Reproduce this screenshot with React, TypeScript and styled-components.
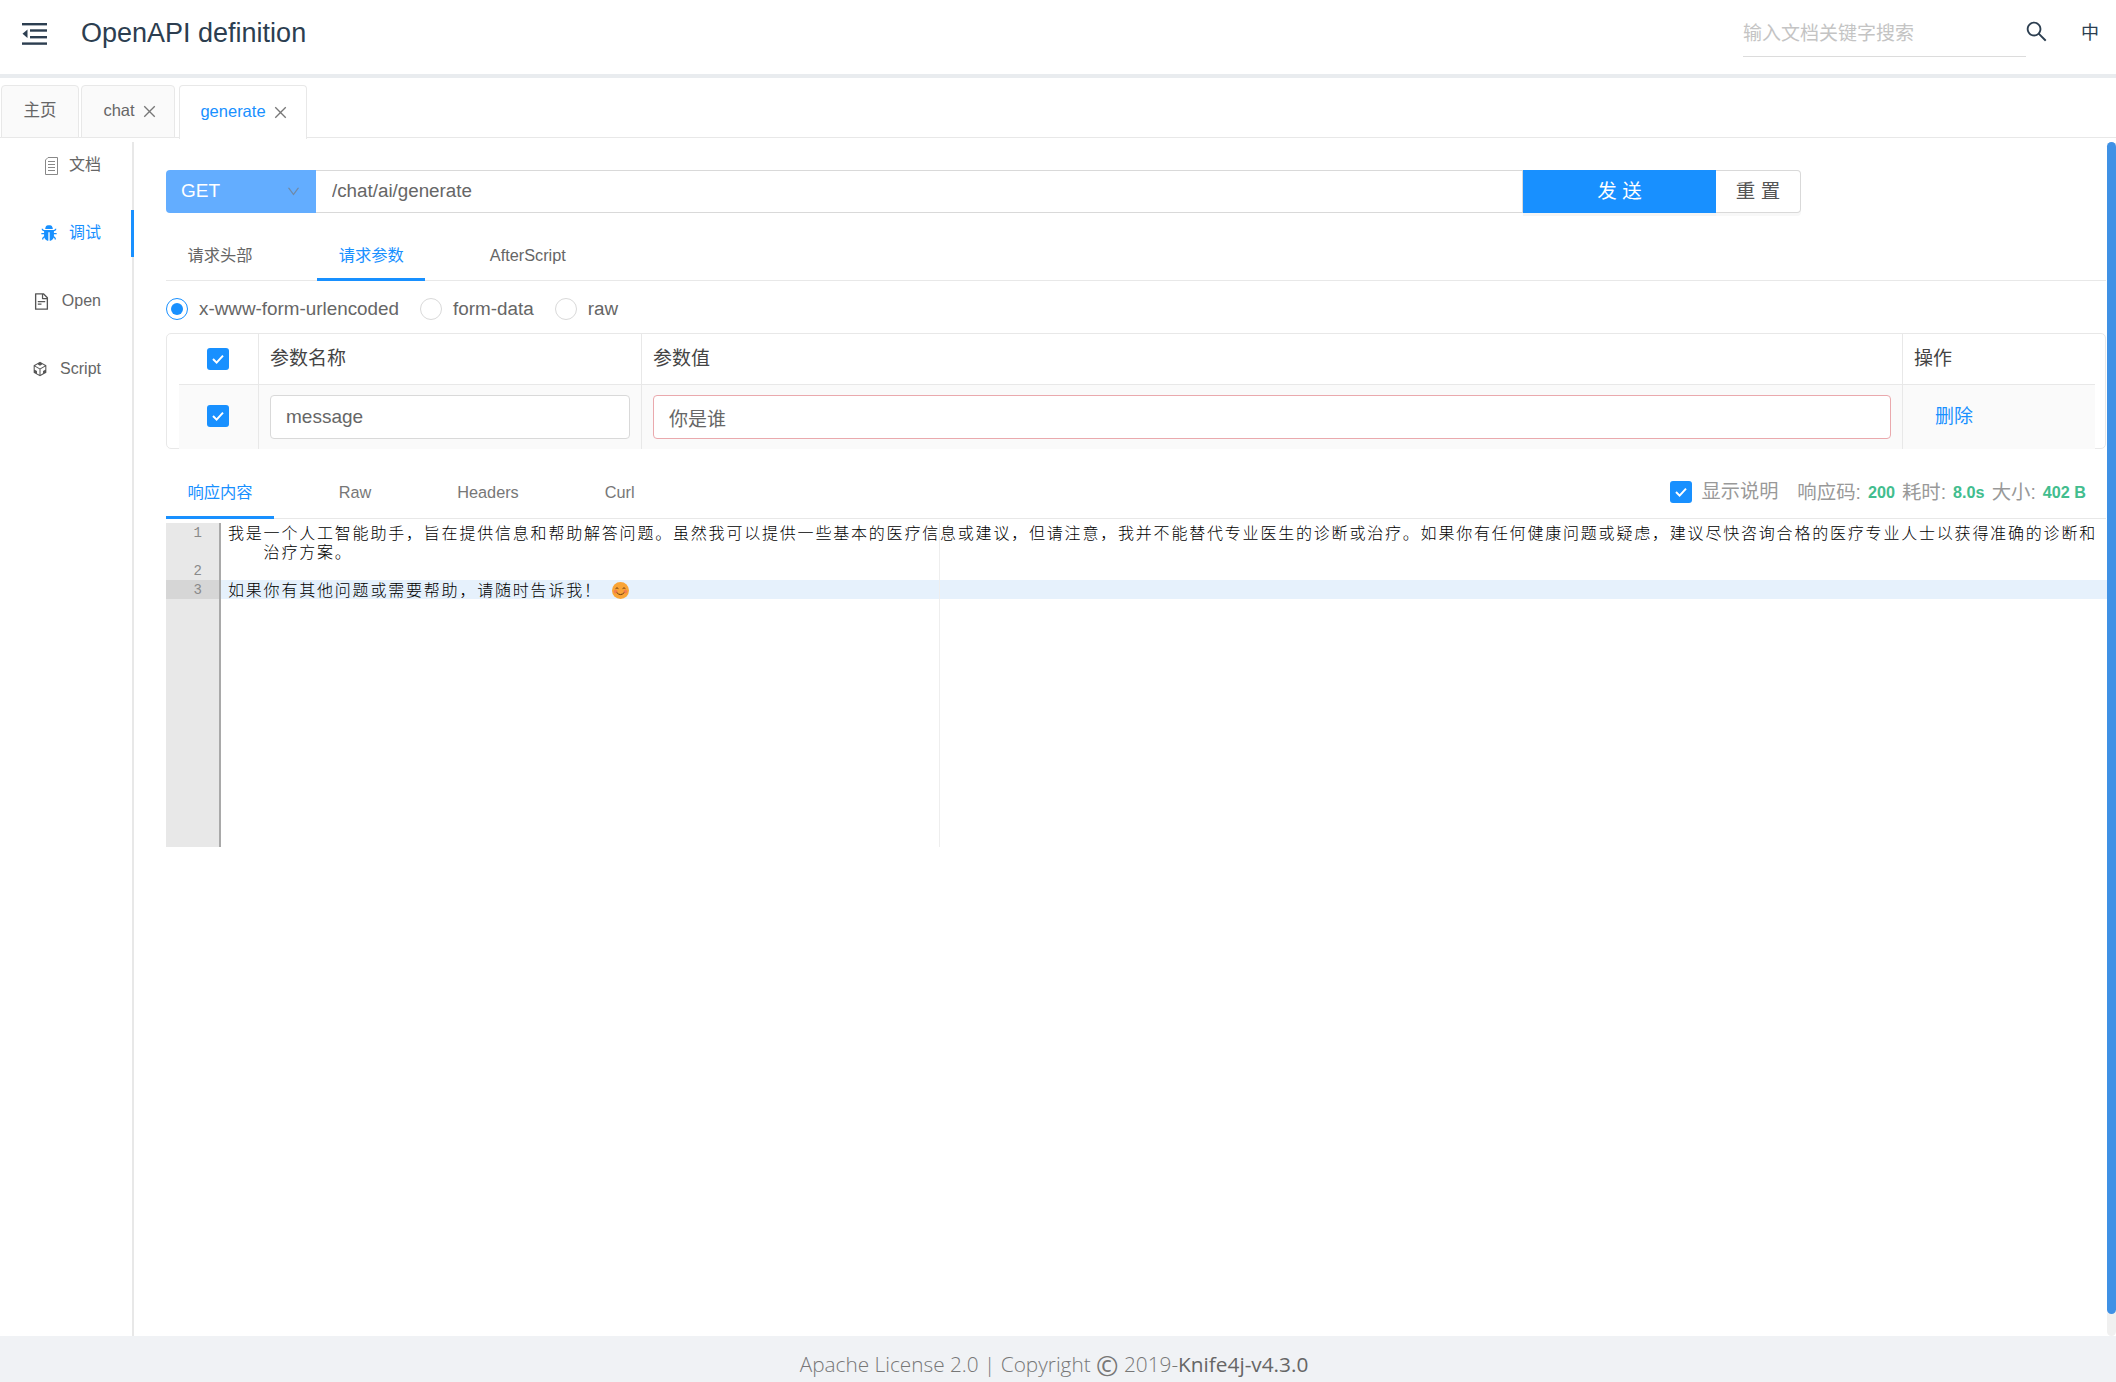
import React from "react";
import styled, { createGlobalStyle } from "styled-components";
import {
  AiFillBug,
  AiOutlineClose,
  AiOutlineCodeSandbox,
  AiOutlineDown,
  AiOutlineFileText,
  AiOutlineSearch,
} from "react-icons/ai";

const SANS = `"Liberation Sans", "Noto Sans CJK SC", sans-serif`;

const GlobalStyle = createGlobalStyle`
  html, body { margin: 0; padding: 0; height: 100%; background: #fff; }
  * { box-sizing: border-box; }
  #root { height: 100%; }
`;

const MenuIcon = () => (
  <svg width="25" height="22" viewBox="0 0 25 22" fill="#2c3e50">
    <rect x="0" y="0" width="25" height="2.4" />
    <rect x="8" y="6.3" width="17" height="2.4" />
    <rect x="8" y="13" width="17" height="2.4" />
    <rect x="0" y="19.4" width="25" height="2.4" />
    <path d="M5.5 6.5v8.5L0.5 10.8z" />
  </svg>
);

const NoteIcon = () => (
  <svg width="13" height="18" viewBox="0 0 13 18" fill="none" stroke="#888" strokeWidth="1">
    <path d="M3 .5h9.5v17H.5V3z" />
    <path d="M3 4.5h7M3 7.5h7M3 10.5h7M3 13.5h7" />
  </svg>
);

const Tick = () => (
  <svg width="14" height="12" viewBox="0 0 14 12" fill="none" stroke="#fff" strokeWidth="2">
    <path d="M2 6l3.6 3.6L12 2.6" />
  </svg>
);

const SmileEmoji = () => (
  <svg width="17" height="17" viewBox="0 0 17 17">
    <circle cx="8.5" cy="8.5" r="8.5" fill="#f9a436" />
    <circle cx="3.6" cy="9.6" r="1.9" fill="#f47f4c" />
    <circle cx="13.4" cy="9.6" r="1.9" fill="#f47f4c" />
    <path d="M3.6 6.6q1.4-1.6 2.8 0M10.6 6.6q1.4-1.6 2.8 0" fill="none" stroke="#6b3a12" strokeWidth="1" />
    <path d="M4.6 10.4q3.9 4.4 7.8 0" fill="none" stroke="#6b3a12" strokeWidth="1" />
  </svg>
);

const App = () => {
  return (
    <Page>
      <GlobalStyle />
      <Header>
        <MenuIcon />
        <Title>OpenAPI definition</Title>
        <SearchInput placeholder="输入文档关键字搜索" readOnly />
        <SearchButton>
          <AiOutlineSearch size={25} color="#2c3e50" />
        </SearchButton>
        <Lang>中</Lang>
      </Header>

      <TabBar>
        <PageTab $width={78} $inset={0}>
          主页
        </PageTab>
        <PageTab $width={94} $inset={5}>
          chat <AiOutlineClose size={17} color="#777" />
        </PageTab>
        <PageTab $width={128} $inset={3} $active>
          generate <AiOutlineClose size={17} color="#777" />
        </PageTab>
      </TabBar>

      <Body>
        <Sidebar>
          <SideItem>
            <NoteIcon />
            文档
          </SideItem>
          <SideItem $active>
            <AiFillBug size={18} />
            调试
          </SideItem>
          <SideItem>
            <AiOutlineFileText size={19} color="#555" />
            Open
          </SideItem>
          <SideItem>
            <AiOutlineCodeSandbox size={18} color="#555" />
            Script
          </SideItem>
        </Sidebar>

        <Main>
          <UrlBar>
            <MethodSelect>
              GET
              <AiOutlineDown size={15} color="#6f8aa8" />
            </MethodSelect>
            <UrlInput value="/chat/ai/generate" readOnly />
            <SendButton>发 送</SendButton>
            <ResetButton>重 置</ResetButton>
          </UrlBar>

          <RequestTabs>
            <RequestTab>请求头部</RequestTab>
            <RequestTab $active>请求参数</RequestTab>
            <RequestTab>AfterScript</RequestTab>
          </RequestTabs>

          <RadioRow>
            <RadioLabel>
              <Radio $checked />
              x-www-form-urlencoded
            </RadioLabel>
            <RadioLabel>
              <Radio />
              form-data
            </RadioLabel>
            <RadioLabel>
              <Radio />
              raw
            </RadioLabel>
          </RadioRow>

          <ParamTable>
            <HeadRow>
              <CheckCell>
                <CheckBox>
                  <Tick />
                </CheckBox>
              </CheckCell>
              <HeadCell>参数名称</HeadCell>
              <HeadCell>参数值</HeadCell>
              <HeadCell $last>操作</HeadCell>
            </HeadRow>
            <BodyRow>
              <BodyCheckCell>
                <CheckBox>
                  <Tick />
                </CheckBox>
              </BodyCheckCell>
              <BodyCell>
                <ParamInput value="message" readOnly />
              </BodyCell>
              <BodyCell>
                <ParamInput value="你是谁" readOnly $invalid />
              </BodyCell>
              <ActionCell>删除</ActionCell>
            </BodyRow>
          </ParamTable>

          <ResponseBar>
            <ResponseTab $active>响应内容</ResponseTab>
            <ResponseTab>Raw</ResponseTab>
            <ResponseTab>Headers</ResponseTab>
            <ResponseTab>Curl</ResponseTab>
            <Summary>
              <SummaryCheck>
                <Tick />
              </SummaryCheck>
              <SummaryToggle>显示说明</SummaryToggle>
              <SummaryLabel>响应码:</SummaryLabel>
              <SummaryValue>200</SummaryValue>
              <SummaryLabel>耗时:</SummaryLabel>
              <SummaryValue>8.0s</SummaryValue>
              <SummaryLabel>大小:</SummaryLabel>
              <SummaryValue>402 B</SummaryValue>
            </Summary>
          </ResponseBar>

          <Editor>
            <Gutter>
              <GutterCell $rows={2}>1</GutterCell>
              <GutterCell $rows={1}>2</GutterCell>
              <GutterCell $rows={1} $active>
                3
              </GutterCell>
            </Gutter>
            <Lines>
              <CodeLine>
                我是一个人工智能助手，旨在提供信息和帮助解答问题。虽然我可以提供一些基本的医疗信息或建议，但请注意，我并不能替代专业医生的诊断或治疗。如果你有任何健康问题或疑虑，建议尽快咨询合格的医疗专业人士以获得准确的诊断和治疗方案。
              </CodeLine>
              <CodeLine>&nbsp;</CodeLine>
              <CodeLine $active>
                如果你有其他问题或需要帮助，请随时告诉我！
                <EmojiWrap>
                  <SmileEmoji />
                </EmojiWrap>
              </CodeLine>
            </Lines>
            <PrintMargin />
          </Editor>
        </Main>
        <ScrollTrack>
          <ScrollThumb />
        </ScrollTrack>
      </Body>

      <Footer>
        Apache License 2.0 | Copyright <CopyMark>©</CopyMark> 2019-<Strong>Knife4j-v4.3.0</Strong>
      </Footer>
    </Page>
  );
};

export default App;

const Page = styled.div`
  display: flex;
  flex-direction: column;
  height: 1382px;
  overflow: hidden;
  font-family: ${SANS};
  line-height: 1.4;
`;

const Header = styled.header`
  display: flex;
  align-items: center;
  flex: none;
  height: 78px;
  padding: 0 17px 6px 22px;
  border-bottom: 4px solid #e9ecef;
`;

const Title = styled.div`
  margin-left: 34px;
  font-size: 27px;
  color: #2c3e50;
`;

const SearchInput = styled.input`
  width: 283px;
  height: 44px;
  margin: 2px 0 0 auto;
  padding: 0 0 2px;
  border: 0;
  border-bottom: 1px solid #dcdcdc;
  outline: none;
  font-family: ${SANS};
  font-size: 19px;
  &::placeholder { color: #c4c4c4; }
`;

const SearchButton = styled.div`
  display: flex;
  width: 25px;
  margin: -6px 0 0 -2px;
`;

const Lang = styled.div`
  margin-left: 32px;
  font-size: 18px;
  color: #2c3e50;
`;

const TabBar = styled.div`
  display: flex;
  flex: none;
  gap: 2px;
  height: 60px;
  padding: 7px 0 0 1px;
  border-bottom: 1px solid #e8e8e8;
`;

const PageTab = styled.div<{ $width: number; $inset: number; $active?: boolean }>`
  display: flex;
  align-items: center;
  justify-content: center;
  gap: 6px;
  width: ${(p) => p.$width}px;
  height: ${(p) => (p.$active ? 54 : 53)}px;
  margin-left: ${(p) => (p.$active ? 2 : 0)}px;
  padding: 0 0 1px ${(p) => p.$inset}px;
  border: 1px solid #e8e8e8;
  border-bottom: ${(p) => (p.$active ? "0" : "1px solid #e8e8e8")};
  border-radius: 4px 4px 0 0;
  background: ${(p) => (p.$active ? "#fff" : "#fafafa")};
  color: ${(p) => (p.$active ? "#1890ff" : "#666")};
  font-size: 16.5px;
`;

const Body = styled.div`
  position: relative;
  display: flex;
  flex: 1;
  min-height: 0;
`;

const Sidebar = styled.nav`
  flex: none;
  width: 134px;
  margin-top: 4px;
  border-right: 2px solid #e8e8e8;
`;

const SideItem = styled.div<{ $active?: boolean }>`
  display: flex;
  align-items: center;
  justify-content: flex-end;
  gap: 11px;
  height: 47px;
  margin-bottom: 20.8px;
  margin-right: -2px;
  padding-right: 30px;
  border-right: 3px solid ${(p) => (p.$active ? "#1890ff" : "transparent")};
  color: ${(p) => (p.$active ? "#1890ff" : "#666")};
  font-size: 16px;
`;

const Main = styled.main`
  flex: 1;
  min-width: 0;
  padding: 32px 10px 0 32px;
`;

const UrlBar = styled.div`
  display: flex;
  height: 43px;
`;

const MethodSelect = styled.div`
  display: flex;
  align-items: center;
  justify-content: space-between;
  flex: none;
  width: 150px;
  padding: 0 15px 0 15px;
  border-radius: 4px 0 0 4px;
  background: #63adff;
  color: #fff;
  font-size: 19px;
`;

const UrlInput = styled.input`
  flex: none;
  width: 1207px;
  padding: 0 16px 2px;
  border: 1px solid #d9d9d9;
  border-left: 0;
  outline: none;
  font-family: ${SANS};
  font-size: 18.8px;
  color: #666;
`;

const SendButton = styled.div`
  display: flex;
  align-items: center;
  justify-content: center;
  flex: none;
  width: 193px;
  background: #1890ff;
  box-shadow: 0 3px 0 #f5f5f5;
  color: #fff;
  font-size: 19.5px;
`;

const ResetButton = styled.div`
  display: flex;
  align-items: center;
  justify-content: center;
  flex: none;
  width: 85px;
  border: 1px solid #d9d9d9;
  border-left: 0;
  border-radius: 0 4px 4px 0;
  box-shadow: 0 3px 0 #f8f8f8;
  color: #555;
  font-size: 19.5px;
`;

const RequestTabs = styled.div`
  display: flex;
  height: 52px;
  margin-top: 16px;
  border-bottom: 1px solid #e8e8e8;
`;

const RequestTab = styled.div<{ $active?: boolean }>`
  display: flex;
  align-items: center;
  height: 52px;
  padding: 4px 21.5px 0;
  margin-right: 43px;
  border-bottom: 3px solid ${(p) => (p.$active ? "#1890ff" : "transparent")};
  color: ${(p) => (p.$active ? "#1890ff" : "#666")};
  font-size: 16.3px;
`;

const RadioRow = styled.div`
  display: flex;
  align-items: center;
  gap: 21px;
  height: 52px;
  padding-top: 4px;
`;

const RadioLabel = styled.label`
  display: flex;
  align-items: center;
  gap: 11px;
  color: #666;
  font-size: 18.85px;
`;

const Radio = styled.span<{ $checked?: boolean }>`
  position: relative;
  display: block;
  width: 22px;
  height: 22px;
  border: 1px solid ${(p) => (p.$checked ? "#1890ff" : "#d9d9d9")};
  border-radius: 50%;
  &::after {
    content: "";
    position: absolute;
    inset: 4px;
    border-radius: 50%;
    background: ${(p) => (p.$checked ? "#1890ff" : "transparent")};
  }
`;

const ParamTable = styled.div`
  height: 116px;
  border: 1px solid #e8e8e8;
  border-radius: 5px;
`;

const HeadRow = styled.div`
  display: grid;
  grid-template-columns: 91px 383px 1261px 1fr;
  height: 51px;
`;

const BodyRow = styled(HeadRow)`
  height: 64px;
`;

const CheckCell = styled.div`
  display: flex;
  align-items: center;
  justify-content: center;
  border-bottom: 1px solid #e8e8e8;
  margin-left: 12px;
  padding: 0 2px 1px 0;
`;

const CheckBox = styled.span`
  display: flex;
  align-items: center;
  justify-content: center;
  flex: none;
  width: 22px;
  height: 22px;
  border-radius: 3px;
  background: #1890ff;
`;

const SummaryCheck = styled(CheckBox)`
  margin-top: -2px;
`;

const HeadCell = styled.div<{ $last?: boolean }>`
  display: flex;
  align-items: center;
  padding-left: 11px;
  border-left: 1px solid #e8e8e8;
  border-bottom: 1px solid #e8e8e8;
  margin-right: ${(p) => (p.$last ? 10 : 0)}px;
  color: #444;
  font-size: 19px;
`;

const BodyCheckCell = styled.div`
  display: flex;
  align-items: center;
  justify-content: center;
  margin-left: 12px;
  padding: 0 2px 2px 0;
  background: #fafafa;
`;

const BodyCell = styled.div`
  display: flex;
  align-items: center;
  padding: 0 11px;
  border-left: 1px solid #e8e8e8;
  background: #fafafa;
`;

const ParamInput = styled.input<{ $invalid?: boolean }>`
  width: 100%;
  height: 44px;
  padding: 0 15px;
  border: 1px solid ${(p) => (p.$invalid ? "#eaa9ad" : "#d9d9d9")};
  border-radius: 4px;
  outline: none;
  background: #fff;
  font-family: ${SANS};
  font-size: 19px;
  color: #666;
`;

const ActionCell = styled(BodyCell)`
  padding-left: 32px;
  margin-right: 10px;
  color: #1890ff;
  font-size: 19px;
`;

const ResponseBar = styled.div`
  display: flex;
  height: 70px;
  border-bottom: 1px solid #e8e8e8;
`;

const ResponseTab = styled.div<{ $active?: boolean }>`
  display: flex;
  align-items: center;
  height: 70px;
  padding: 20px 21.5px 0;
  margin-right: 43px;
  border-bottom: 3px solid ${(p) => (p.$active ? "#1890ff" : "transparent")};
  color: ${(p) => (p.$active ? "#1890ff" : "#777")};
  font-size: 16.3px;
`;

const Summary = styled.div`
  display: flex;
  align-items: center;
  margin: 18px 13px 0 auto;
`;

const SummaryToggle = styled.span`
  margin: 0 19px 0 10px;
  color: #999;
  font-size: 19.2px;
`;

const SummaryLabel = styled.span`
  color: #999;
  font-size: 19.4px;
`;

const SummaryValue = styled.span`
  margin: 0 7px;
  color: #42bd8e;
  font-size: 16.2px;
  font-weight: 700;
`;

const Editor = styled.div`
  position: relative;
  display: flex;
  height: 324px;
  margin: 4px -1px 0 0;
`;

const Gutter = styled.div`
  flex: none;
  width: 55px;
  background: #e8e8e8;
  border-right: 2px solid #a9a9a9;
`;

const GutterCell = styled.div<{ $rows: number; $active?: boolean }>`
  height: ${(p) => p.$rows * 19}px;
  padding: 1px 17px 0 0;
  background: ${(p) => (p.$active ? "#d6d6d6" : "transparent")};
  font-family: "Liberation Mono", monospace;
  font-size: 14px;
  line-height: 19px;
  text-align: right;
  color: #8a8a8a;
`;

const Lines = styled.div`
  flex: 1;
  min-width: 0;
`;

const CodeLine = styled.div<{ $active?: boolean }>`
  padding: 0 6px 0 42.6px;
  text-indent: -35.6px;
  background: ${(p) => (p.$active ? "#e6f1fc" : "transparent")};
  font-family: "Noto Sans CJK SC", monospace;
  font-size: 16px;
  font-weight: 300;
  letter-spacing: 1.8px;
  line-height: 19px;
  color: #000;
`;

const EmojiWrap = styled.span`
  display: inline-block;
  width: 17px;
  height: 17px;
  margin-left: 10px;
  text-indent: 0;
  vertical-align: -3px;
`;

const PrintMargin = styled.div`
  position: absolute;
  top: 0;
  bottom: 0;
  left: 773px;
  width: 1px;
  background: #eee;
`;

const ScrollTrack = styled.div`
  position: absolute;
  top: 4px;
  right: 0;
  bottom: 0;
  width: 9px;
  border-radius: 5px;
  background: #f0f0f0;
`;

const ScrollThumb = styled.div`
  height: 1172px;
  border-radius: 5px;
  background: #3f91e5;
`;

const Footer = styled.footer`
  display: flex;
  align-items: center;
  justify-content: center;
  flex: none;
  height: 46px;
  padding: 12px 8px 0 0;
  background: #f0f2f5;
  font-family: "Open Sans", "Noto Sans CJK SC", sans-serif;
  font-size: 20.8px;
  font-weight: 300;
  color: #777;
  white-space: pre;
`;

const CopyMark = styled.span`
  font-size: 27px;
  font-weight: 400;
  line-height: 1;
`;

const Strong = styled.span`
  font-weight: 400;
  color: #666;
`;
